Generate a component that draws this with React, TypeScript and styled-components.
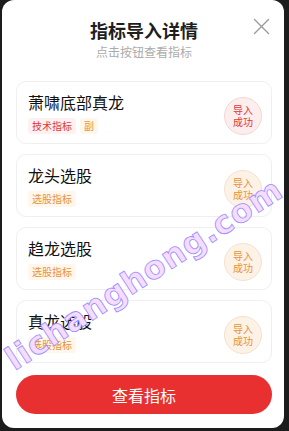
import React from "react";
import styled, { createGlobalStyle } from "styled-components";

const GlobalStyle = createGlobalStyle`
  html, body {
    margin: 0;
    padding: 0;
    background: #1c1c1c;
  }
  body {
    font-family: "Noto Sans CJK SC", "Noto Sans", sans-serif;
  }
`;

const colors = {
  title: "#1e1e1e",
  sub: "#ababab",
  red: "#e0373a",
  redBg: "#fdeeee",
  redBorder: "#f4d6d6",
  orange: "#e8913a",
  orangeBg: "#fdf2e6",
  orangeBorder: "#f3e2cf",
  button: "#e83030",
};

type Tone = "red" | "orange";

interface Indicator {
  name: string;
  tags: { text: string; tone: Tone }[];
  tone: Tone;
}

const indicators: Indicator[] = [
  {
    name: "萧啸底部真龙",
    tags: [
      { text: "技术指标", tone: "red" },
      { text: "副", tone: "orange" },
    ],
    tone: "red",
  },
  { name: "龙头选股", tags: [{ text: "选股指标", tone: "orange" }], tone: "orange" },
  { name: "趋龙选股", tags: [{ text: "选股指标", tone: "orange" }], tone: "orange" },
  { name: "真龙选股", tags: [{ text: "选股指标", tone: "orange" }], tone: "orange" },
];

const Page = styled.div`
  width: 289px;
  height: 431px;
  overflow: hidden;
  display: flex;
  align-items: flex-start;
  padding-left: 2px;
  box-sizing: border-box;
`;

const Modal = styled.div`
  position: relative;
  width: 282px;
  height: 428px;
  background: #ffffff;
  border-radius: 12px;
  overflow: hidden;
  display: flex;
  flex-direction: column;
  padding: 19px 12px 14px 14px;
  box-sizing: border-box;
`;

const Header = styled.div`
  display: flex;
  flex-direction: column;
  align-items: center;
  gap: 2px;
  margin-bottom: 20px;
`;

const Title = styled.h1`
  margin: 0;
  font-size: 18px;
  line-height: 22px;
  font-weight: 700;
  color: ${colors.title};
`;

const Subtitle = styled.div`
  font-size: 12px;
  line-height: 18px;
  color: ${colors.sub};
`;

const CloseButton = styled.button`
  position: absolute;
  top: 18px;
  right: 14px;
  width: 17px;
  height: 17px;
  padding: 0;
  border: none;
  background: none;
  display: flex;
  cursor: pointer;
`;

const List = styled.div`
  display: flex;
  flex-direction: column;
  gap: 10px;
`;

const Card = styled.div`
  height: 63px;
  flex-shrink: 0;
  box-sizing: border-box;
  border: 1px solid #efefef;
  border-radius: 10px;
  display: flex;
  align-items: center;
  justify-content: space-between;
  padding: 0 9px 0 11px;
`;

const CardText = styled.div`
  display: flex;
  flex-direction: column;
  gap: 5px;
  margin-top: -1px;
`;

const Name = styled.div`
  font-size: 16px;
  line-height: 22px;
  color: #111111;
`;

const Tags = styled.div`
  display: flex;
  gap: 4px;
`;

const Tag = styled.span<{ $tone: Tone }>`
  font-size: 10px;
  line-height: 16px;
  padding: 0 4px;
  border-radius: 3px;
  color: ${(p) => (p.$tone === "red" ? colors.red : colors.orange)};
  background: ${(p) => (p.$tone === "red" ? "#fdf1f1" : "#fff6ec")};
`;

const Badge = styled.div<{ $tone: Tone }>`
  width: 38px;
  height: 38px;
  box-sizing: border-box;
  border-radius: 50%;
  margin-top: 6px;
  display: flex;
  align-items: center;
  justify-content: center;
  text-align: center;
  font-size: 10px;
  line-height: 12px;
  color: ${(p) => (p.$tone === "red" ? colors.red : colors.orange)};
  background: ${(p) => (p.$tone === "red" ? colors.redBg : colors.orangeBg)};
  border: 1px solid ${(p) => (p.$tone === "red" ? colors.redBorder : colors.orangeBorder)};
`;

const ViewButton = styled.button`
  margin-top: 12px;
  height: 39px;
  flex-shrink: 0;
  border: none;
  border-radius: 20px;
  background: ${colors.button};
  color: #ffffff;
  font-family: "Noto Sans CJK SC", "Noto Sans", sans-serif;
  font-size: 16px;
  cursor: pointer;
`;

const Watermark = styled.span`
  position: absolute;
  left: 142px;
  top: 274px;
  transform: translate(-50%, -50%) rotate(-33deg);
  white-space: nowrap;
  font-family: "DejaVu Sans", sans-serif;
  font-weight: 700;
  font-size: 32px;
  letter-spacing: 1px;
  color: #f6dcff;
  -webkit-text-stroke: 0.8px #9a8cff;
  pointer-events: none;
`;

const CloseIcon = () => (
  <svg width="17" height="17" viewBox="0 0 17 17" fill="none">
    <path d="M1.5 1.5 L15.5 15.5 M15.5 1.5 L1.5 15.5" stroke="#9a9a9a" strokeWidth="1.4" strokeLinecap="round" />
  </svg>
);

const App = () => {
  return (
    <>
      <GlobalStyle />
      <Page>
        <Modal>
          <Header>
            <Title>指标导入详情</Title>
            <Subtitle>点击按钮查看指标</Subtitle>
          </Header>
          <CloseButton aria-label="close">
            <CloseIcon />
          </CloseButton>
          <List>
            {indicators.map((item) => (
              <Card key={item.name}>
                <CardText>
                  <Name>{item.name}</Name>
                  <Tags>
                    {item.tags.map((t) => (
                      <Tag key={t.text} $tone={t.tone}>
                        {t.text}
                      </Tag>
                    ))}
                  </Tags>
                </CardText>
                <Badge $tone={item.tone}>
                  导入
                  <br />
                  成功
                </Badge>
              </Card>
            ))}
          </List>
          <ViewButton>查看指标</ViewButton>
          <Watermark>lichanghong.com</Watermark>
        </Modal>
      </Page>
    </>
  );
};

export default App;
